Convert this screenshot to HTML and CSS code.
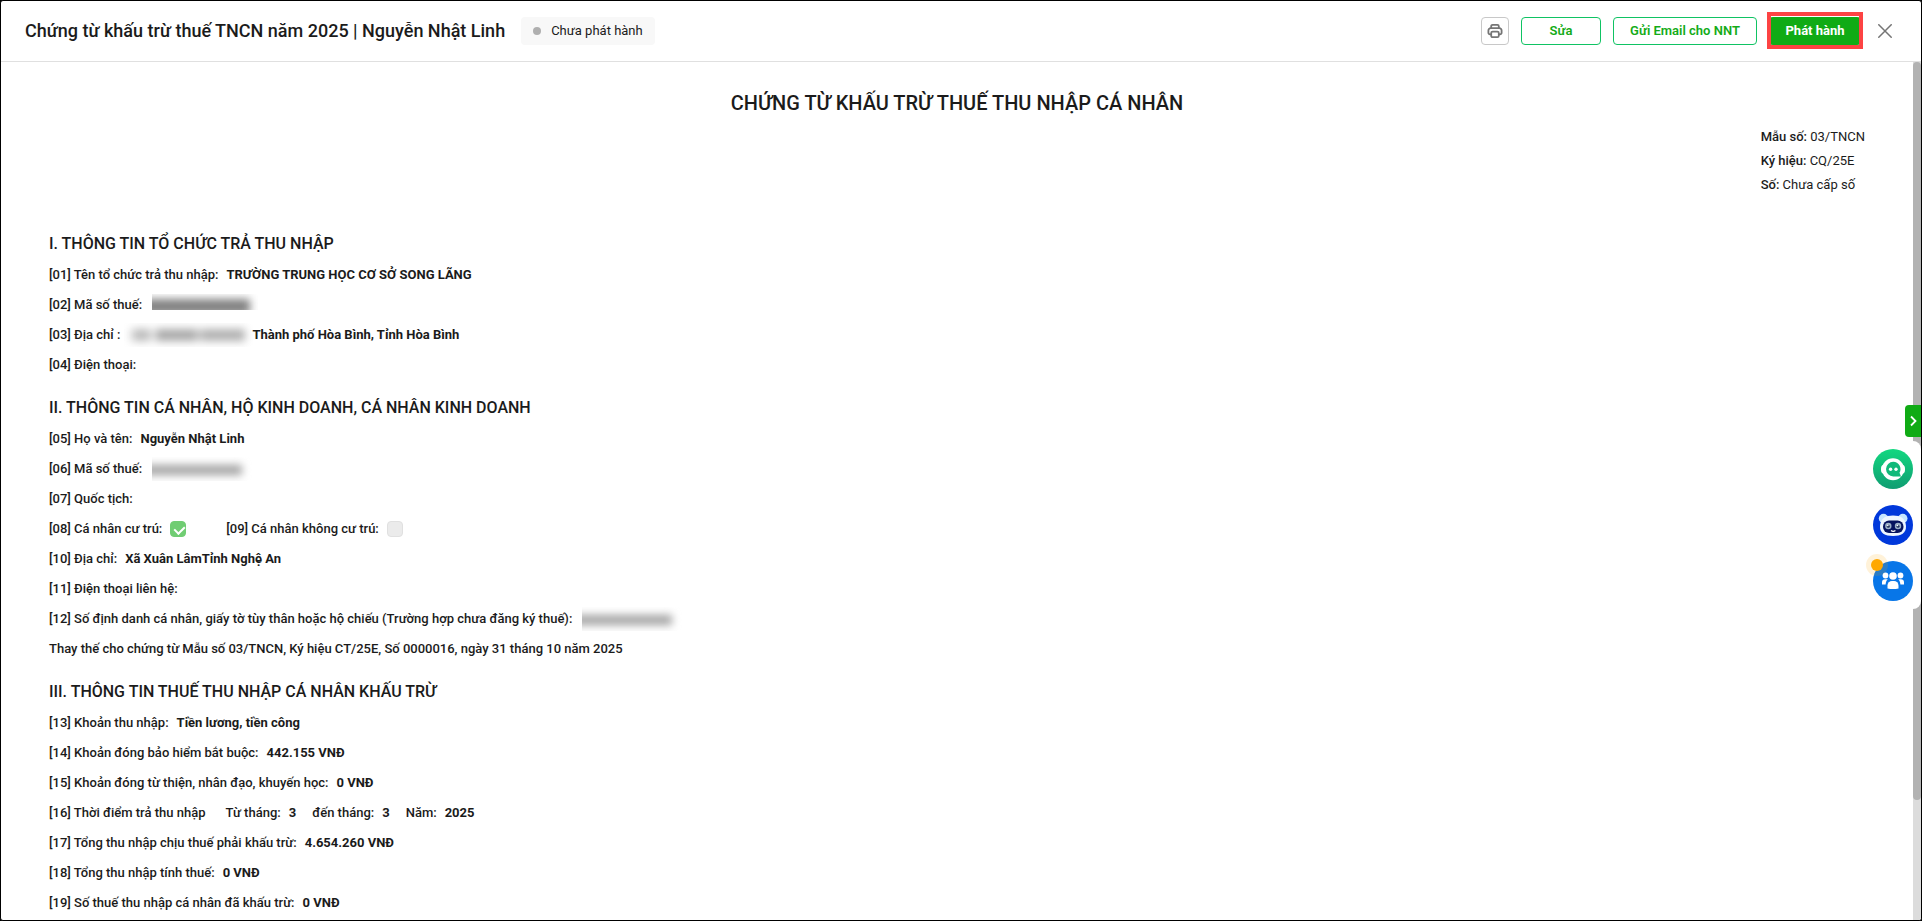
FILE: index.html
```html
<!DOCTYPE html>
<html lang="vi">
<head>
<meta charset="utf-8">
<title>Chứng từ khấu trừ thuế TNCN</title>
<link rel="stylesheet" href="styles.css">
</head>
<body>
<div class="window">
  <header class="topbar">
    <h1 class="topbar-title">Chứng từ khấu trừ thuế TNCN năm 2025 | Nguyễn Nhật Linh</h1>
    <span class="status"><span class="status-dot"></span>Chưa phát hành</span>
    <div class="actions">
      <button class="btn btn-icon" type="button" aria-label="In">
        <svg width="16" height="16" viewBox="0 0 16 16" fill="none" stroke="#757575" stroke-width="1.8" stroke-linejoin="round">
          <path d="M4.2 5.2V3.2a1.4 1.4 0 0 1 1.4-1.4h4.8a1.4 1.4 0 0 1 1.4 1.4v2"/>
          <path d="M4.2 11.4H3a1.6 1.6 0 0 1-1.6-1.6V7.4A2.2 2.2 0 0 1 3.6 5.2h8.8a2.2 2.2 0 0 1 2.2 2.200v2.400A1.6 1.6 0 0 1 13 11.400h-1.200"/>
          <rect x="4.200" y="8.700" width="7.600" height="5.500" rx="1.400"/>
        </svg>
      </button>
      <button class="btn btn-outline" type="button">Sửa</button>
      <button class="btn btn-outline btn-wide" type="button">Gửi Email cho NNT</button>
      <div class="highlight"><button class="btn btn-primary" type="button">Phát hành</button></div>
      <button class="btn-close" type="button" aria-label="Đóng">
        <svg width="14" height="14" viewBox="0 0 14 14" stroke="#757575" stroke-width="1.5"><path d="M.3.3l13.400 13.400M13.700.3.3 13.700"/></svg>
      </button>
    </div>
  </header>

  <div class="body">
    <main class="document">
      <h2 class="doc-title">CHỨNG TỪ KHẤU TRỪ THUẾ THU NHẬP CÁ NHÂN</h2>
      <div class="meta">
        <p><b>Mẫu số:</b> 03/TNCN</p>
        <p><b>Ký hiệu:</b> CQ/25E</p>
        <p><b>Số:</b> Chưa cấp số</p>
      </div>

      <section class="section">
        <h3>I. THÔNG TIN TỔ CHỨC TRẢ THU NHẬP</h3>
        <div class="row"><span>[01] Tên tổ chức trả thu nhập:</span><strong>TRƯỜNG TRUNG HỌC CƠ SỞ SONG LÃNG</strong></div>
        <div class="row"><span>[02] Mã số thuế:</span><span class="redacted redacted-dark"></span></div>
        <div class="row"><span>[03] Địa chỉ :</span><span class="redacted redacted-address"></span><strong class="joined">Thành phố Hòa Bình, Tỉnh Hòa Bình</strong></div>
        <div class="row"><span>[04] Điện thoại:</span></div>
      </section>

      <section class="section">
        <h3>II. THÔNG TIN CÁ NHÂN, HỘ KINH DOANH, CÁ NHÂN KINH DOANH</h3>
        <div class="row"><span>[05] Họ và tên:</span><strong>Nguyễn Nhật Linh</strong></div>
        <div class="row"><span>[06] Mã số thuế:</span><span class="redacted"></span></div>
        <div class="row"><span>[07] Quốc tịch:</span></div>
        <div class="row row-checks">
          <label class="check">[08] Cá nhân cư trú:<input type="checkbox" checked disabled></label>
          <label class="check">[09] Cá nhân không cư trú:<input type="checkbox" disabled></label>
        </div>
        <div class="row"><span>[10] Địa chỉ:</span><strong>Xã Xuân LâmTỉnh Nghệ An</strong></div>
        <div class="row"><span>[11] Điện thoại liên hệ:</span></div>
        <div class="row"><span>[12] Số định danh cá nhân, giấy tờ tùy thân hoặc hộ chiếu (Trường hợp chưa đăng ký thuế):</span><span class="redacted"></span></div>
        <div class="row"><span>Thay thế cho chứng từ Mẫu số 03/TNCN, Ký hiệu CT/25E, Số 0000016, ngày 31 tháng 10 năm 2025</span></div>
      </section>

      <section class="section">
        <h3>III. THÔNG TIN THUẾ THU NHẬP CÁ NHÂN KHẤU TRỪ</h3>
        <div class="row"><span>[13] Khoản thu nhập:</span><strong>Tiền lương, tiền công</strong></div>
        <div class="row"><span>[14] Khoản đóng bảo hiểm bắt buộc:</span><strong>442.155 VNĐ</strong></div>
        <div class="row"><span>[15] Khoản đóng từ thiện, nhân đạo, khuyến học:</span><strong>0 VNĐ</strong></div>
        <div class="row row-period">
          <span class="period-label">[16] Thời điểm trả thu nhập</span>
          <span class="pair">Từ tháng:<strong>3</strong></span>
          <span class="pair">đến tháng:<strong>3</strong></span>
          <span class="pair">Năm:<strong>2025</strong></span>
        </div>
        <div class="row"><span>[17] Tổng thu nhập chịu thuế phải khấu trừ:</span><strong>4.654.260 VNĐ</strong></div>
        <div class="row"><span>[18] Tổng thu nhập tính thuế:</span><strong>0 VNĐ</strong></div>
        <div class="row"><span>[19] Số thuế thu nhập cá nhân đã khấu trừ:</span><strong>0 VNĐ</strong></div>
      </section>
    </main>
    <div class="scroll-track"><div class="scroll-thumb"></div></div>
  </div>

  <aside class="dock">
    <button class="dock-toggle" type="button" aria-label="Mở rộng">
      <svg width="8" height="12" viewBox="0 0 8 12" fill="none" stroke="#fff" stroke-width="1.8"><path d="M2 1.500 6.500 6 2 10.500"/></svg>
    </button>
    <div class="dock-panel">
      <button class="dock-item" type="button" aria-label="Trò chuyện">
        <svg width="40" height="40" viewBox="0 0 40 40">
          <defs><linearGradient id="chat" x1="0" y1="0" x2="0" y2="1"><stop offset="0" stop-color="#12d880"/><stop offset="1" stop-color="#109d72"/></linearGradient></defs>
          <circle cx="20" cy="20" r="20" fill="url(#chat)"/>
          <rect x="8" y="15.500" width="24" height="9.500" rx="4" fill="#fff"/>
          <circle cx="20" cy="20.200" r="11" fill="#fff"/>
          <path d="M20.300 12.800a7.300 7.300 0 1 0 0 14.600H28l-1.500-3.600a7.300 7.300 0 0 0-6.200-11z" fill="#11b97a"/>
          <circle cx="17.600" cy="20.200" r="1.700" fill="#fff"/><circle cx="23" cy="20.200" r="1.700" fill="#fff"/>
        </svg>
      </button>
      <button class="dock-item" type="button" aria-label="Trợ lý AI">
        <svg width="40" height="40" viewBox="0 0 40 40">
          <circle cx="20" cy="20" r="20" fill="#0038db"/>
          <circle cx="10.500" cy="13.500" r="4.700" fill="#c5e5ff"/><circle cx="29.800" cy="13.500" r="4.700" fill="#c5e5ff"/>
          <path d="M20 10.500c8 0 12.500 3 13 10.500.4 7-5 10-13 10S6.600 28 7 21c.5-7.500 5-10.500 13-10.500z" fill="#edf6ff"/>
          <rect x="10" y="15.500" width="20.500" height="12.500" rx="6" fill="#06145f"/>
          <circle cx="15.300" cy="21" r="3.200" fill="#9bb0c8"/><circle cx="25" cy="21" r="3.200" fill="#9bb0c8"/>
          <circle cx="15.300" cy="21.300" r="1.500" fill="#24345f"/><circle cx="25" cy="21.300" r="1.500" fill="#24345f"/>
          <circle cx="14.800" cy="20.500" r=".8" fill="#fff"/><circle cx="24.500" cy="20.500" r=".8" fill="#fff"/>
          <path d="M18 25.500q2.200 1.800 4.400 0" fill="none" stroke="#fff" stroke-width="1.200"/>
        </svg>
      </button>
      <button class="dock-item" type="button" aria-label="Cộng đồng">
        <svg width="40" height="40" viewBox="0 0 40 40">
          <circle cx="20" cy="20" r="20" fill="#0876e8"/>
          <g fill="#fff">
            <circle cx="12.500" cy="14.500" r="2.900"/><circle cx="27.500" cy="14.500" r="2.900"/>
            <path d="M9 23.500v-2a3.200 3.200 0 0 1 3.200-3.200h2.600c-1.500 1.400-2 3-2.200 5.200zM31 23.500v-2a3.200 3.200 0 0 0-3.200-3.200h-2.600c1.500 1.400 2 3 2.200 5.200z"/>
            <path d="M14.500 27.500v-3a4.500 4.500 0 0 1 4.500-4.500h2a4.500 4.500 0 0 1 4.500 4.500v3q-5.500 1.200-11 0z"/>
            <circle cx="20" cy="15" r="3.800"/>
          </g>
        </svg>
        <span class="dock-badge"></span>
      </button>
    </div>
  </aside>
</div>
</body>
</html>
```
FILE: styles.css
```css
* {
  box-sizing: border-box;
}

body {
  margin: 0;
  background: #000;
  color: #1b1b1b;
  font: 500 13px/20px Roboto, "Noto Sans", sans-serif;
}

h1, h2, h3, p {
  margin: 0;
  font-weight: 500;
}

button {
  font: inherit;
  padding: 0;
  border: 0;
  background: none;
}

svg {
  display: block;
}

.window {
  position: relative;
  display: flex;
  flex-direction: column;
  height: 100vh;
  overflow: hidden;
  border: 1px solid #000;
  border-radius: 3px;
  background: #fff;
}

/* Top bar */
.topbar {
  display: flex;
  flex: none;
  align-items: center;
  gap: 16px;
  height: 61px;
  padding: 0 24px;
  border-bottom: 1px solid #e0e0e0;
}

.topbar-title {
  font-size: 18px;
  line-height: 24px;
}

.status {
  display: flex;
  align-items: center;
  gap: 10px;
  height: 28px;
  padding: 0 12px;
  border-radius: 4px;
  background: #f8f8f8;
  font-weight: 400;
}

.status-dot {
  width: 8px;
  height: 8px;
  border-radius: 50%;
  background: #afafaf;
}

.actions {
  display: flex;
  align-items: center;
  gap: 12px;
  margin-left: auto;
}

.btn {
  display: flex;
  align-items: center;
  justify-content: center;
  height: 28px;
  border-radius: 4px;
}

.btn-icon {
  width: 28px;
  border: 1px solid #c8c8c8;
}

.btn-outline {
  width: 80px;
  border: 1px solid #0fc363;
  color: #14ab18;
  font-weight: 600;
}

.btn-wide {
  width: 144px;
}

.btn-primary {
  width: 92px;
  background: #10ab15;
  color: #fff;
  font-weight: 700;
}

.highlight {
  position: relative;
}

.highlight::after {
  content: "";
  position: absolute;
  inset: -5px -2px -4px;
  border: 4px solid #fd4343;
  pointer-events: none;
}

.btn-close {
  display: flex;
  align-items: center;
  justify-content: center;
  width: 24px;
  height: 24px;
}

/* Document */
.body {
  display: flex;
  flex: 1;
  min-height: 0;
}

.document {
  flex: 1;
  padding: 27px 48px 0;
  overflow: hidden;
}

.doc-title {
  font-size: 20px;
  line-height: 28px;
  text-align: center;
}

.meta {
  width: fit-content;
  margin: 8px 0 37px auto;
  line-height: 24px;
}

.meta p {
  font-weight: 400;
}

.meta b {
  font-weight: 500;
}

.section {
  margin-bottom: 18px;
}

.section h3 {
  font-size: 16px;
  line-height: 20px;
  margin-bottom: 6px;
}

.row {
  display: flex;
  align-items: center;
  gap: 8px;
  height: 30px;
}

.row strong {
  font-weight: 700;
}

.row-checks {
  gap: 40px;
}

.row-period {
  gap: 16px;
}

.period-label {
  margin-right: 4px;
}

.pair,
.check {
  display: flex;
  align-items: center;
  gap: 8px;
}

.check input {
  appearance: none;
  width: 16px;
  height: 16px;
  margin: 0;
  border: 1px solid #e0e0e0;
  border-radius: 4px;
  background: #ebebeb;
}

.check input:checked {
  position: relative;
  border-color: #70cd73;
  background: #70cd73;
}

.check input:checked::after {
  content: "";
  position: absolute;
  left: 5px;
  top: 2px;
  width: 5px;
  height: 8px;
  border: solid #fff;
  border-width: 0 2px 2px 0;
  transform: rotate(45deg);
}

/* Blurred personal data */
.redacted {
  position: relative;
  width: 106px;
  height: 24px;
  margin-left: 2px;
  overflow: hidden;
}

.redacted::before {
  content: "";
  position: absolute;
  inset: 8px 16px 6px -8px;
  background: #a2a2a2;
  filter: blur(4px);
}

.redacted-dark {
  align-self: flex-start;
  height: 16px;
  margin-top: 4px;
}

.redacted-dark::before {
  inset: 5px 8px -4px -8px;
  background: #808080;
}

.redacted-address {
  width: 129px;
  margin-left: -4px;
}

.redacted-address::before {
  inset: 6px 8px 6px 6px;
  background: linear-gradient(90deg, #ddd 0 4px, #bbb 4px 20px, #eee 20px 26px, #a8a8a8 26px 66px, #ccc 66px 72px, #b0b0b0 72px);
}

.joined {
  margin-left: -9px;
}

/* Scrollbar */
.scroll-track {
  flex: none;
  width: 8px;
  background: #dcdcdc;
}

.scroll-thumb {
  height: 86%;
  border-radius: 4px;
  background: #b2b2b2;
}

/* Floating dock */
.dock {
  position: absolute;
  top: 44%;
  right: 0;
  display: flex;
  flex-direction: column;
  align-items: flex-end;
  gap: 4px;
}

.dock-toggle {
  display: flex;
  align-items: center;
  justify-content: center;
  width: 16px;
  height: 32px;
  border-radius: 4px 0 0 4px;
  background: #10ab15;
}

.dock-panel {
  display: flex;
  flex-direction: column;
  gap: 16px;
  padding: 8px;
  border-radius: 8px;
  background: #fff;
}

.dock-item {
  position: relative;
}

.dock-badge {
  position: absolute;
  top: -2px;
  left: -2px;
  width: 12px;
  height: 12px;
  border-radius: 50%;
  background: #ffa800;
  box-shadow: 0 0 0 5px rgba(255, 168, 0, 0.15);
}
```
